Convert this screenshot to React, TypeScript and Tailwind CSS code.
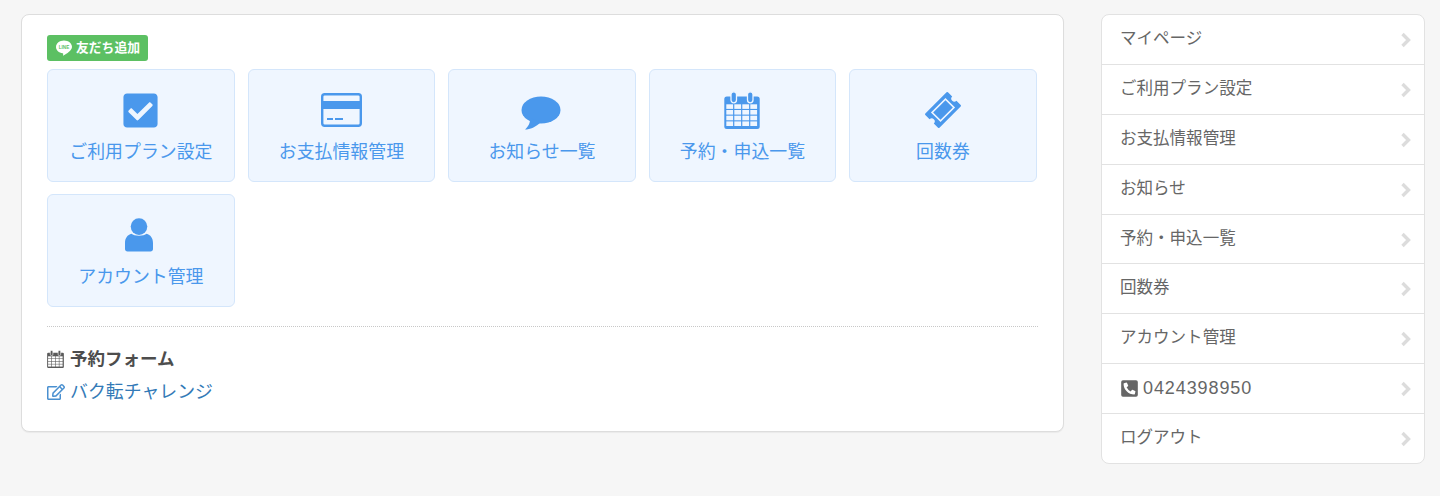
import React from "react";
import { FaCheckSquare, FaRegEdit, FaPhoneSquareAlt } from "react-icons/fa";

const font = "font-['Liberation_Sans','Noto_Sans_CJK_JP',sans-serif]";
const blue = "#4a98ec";

function Card() {
  return (
    <svg width="41" height="34" viewBox="0 0 41 34" fill="none">
      <rect x="1.2" y="1.2" width="38.600" height="31.600" rx="2.500" stroke={blue} strokeWidth="2.400" />
      <rect x="1" y="8" width="39" height="8" fill={blue} />
      <rect x="6" y="25" width="6" height="2" fill={blue} />
      <rect x="14" y="25" width="8" height="2" fill={blue} />
    </svg>
  );
}

function Calendar({ color = blue, bg = "#eff6ff", w = 36, h = 38 }: { color?: string; bg?: string; w?: number; h?: number }) {
  const cells = [];
  for (let r = 0; r < 4; r++)
    for (let c = 0; c < 4; c++)
      cells.push(<rect key={`${r}-${c}`} x={2.3 + c * 8} y={13.3 + r * 5.7} width="6.800" height="4.600" fill={bg} />);
  return (
    <svg width={w} height={h} viewBox="0 0 36 38">
      <rect x="0.3" y="5.500" width="35.400" height="32.500" rx="2.500" fill={color} />
      <rect x="7" y="0.800" width="5.500" height="11" rx="2.750" fill={color} stroke={bg} strokeWidth="1.300" />
      <rect x="23.500" y="0.800" width="5.500" height="11" rx="2.750" fill={color} stroke={bg} strokeWidth="1.300" />
      {cells}
    </svg>
  );
}

function Ticket() {
  return (
    <svg width="38" height="38" viewBox="0 0 38 38">
      <g transform="rotate(-45 19 19)">
        <path
          d="M3 10Q3 9 4 9H34Q35 9 35 10V16a3 3 0 0 0 0 6V28Q35 29 34 29H4Q3 29 3 28V22a3 3 0 0 0 0-6z"
          fill={blue}
        />
        <rect x="9.500" y="13" width="19" height="12" fill="none" stroke="#eff6ff" strokeWidth="1.600" />
      </g>
    </svg>
  );
}

function Bubble() {
  return (
    <svg width="40" height="34" viewBox="0 0 40 34" className="mt-[6px] -ml-[2px]">
      <ellipse cx="20" cy="14" rx="19.500" ry="13.500" fill={blue} />
      <path d="M9 22C9.500 27 7 31 4 33.500C9 33.500 15 31 20 26Z" fill={blue} />
    </svg>
  );
}

function Person() {
  return (
    <svg width="30" height="34" viewBox="0 0 30 34" className="-ml-[3px]">
      <circle cx="15" cy="8.600" r="8.300" fill={blue} />
      <path d="M7.500 15.800C10 18.300 20 18.300 22.500 15.800C26.500 17 29 20 29 25V31C29 32.500 28 33.500 26.500 33.500H3.500C2 33.500 1 32.500 1 31V25C1 20 3.500 17 7.500 15.800Z" fill={blue} />
    </svg>
  );
}

function Chevron() {
  return (
    <svg width="11" height="16" viewBox="0 0 11 16" fill="none" className="mt-[5px]">
      <path d="M2.500 2L8.500 8L2.500 14" stroke="#dcdcdc" strokeWidth="3.400" />
    </svg>
  );
}

const tiles: { label: string; icon: React.ReactNode }[] = [
  { label: "ご利用プラン設定", icon: <FaCheckSquare size={39} color={blue} /> },
  { label: "お支払情報管理", icon: <Card /> },
  { label: "お知らせ一覧", icon: <Bubble /> },
  { label: "予約・申込一覧", icon: <Calendar /> },
  { label: "回数券", icon: <Ticket /> },
  { label: "アカウント管理", icon: <Person /> },
];

const menu = ["マイページ", "ご利用プラン設定", "お支払情報管理", "お知らせ", "予約・申込一覧", "回数券", "アカウント管理", "TEL", "ログアウト"];

export default function App() {
  return (
    <div className={`${font} min-h-[496px] bg-[#f6f6f6] flex items-start gap-[37px] pl-[21px] pt-[14px]`}>
      <main className="w-[1043px] h-[418px] bg-white border border-[#dddddd] rounded-lg pl-[25px] pr-[25px] pt-5 shadow-[0_1px_1px_rgba(0,0,0,0.05)]">
        <div className="flex w-[101px] h-[26px] items-center gap-[3px] bg-[#5cc063] rounded-[3px] pl-2 text-white">
          <svg width="18" height="18" viewBox="0 0 18 18">
            <path d="M9 1.500C4.600 1.500 1 4.300 1 7.900c0 3.200 2.900 5.900 6.700 6.300.9.200.4 1.400.3 2 0 .4.3.4.7.2 1-.5 5.100-3 7-5.400.8-1 1.300-2 1.300-3.100 0-3.600-3.600-6.400-8-6.400z" fill="#fff" />
            <text x="9" y="9.700" textAnchor="middle" fontSize="4.600" fontWeight="700" fill="#5cc063" fontFamily="Liberation Sans">LINE</text>
          </svg>
          <span className="text-[12.800px] font-bold leading-none">友だち追加</span>
        </div>
        <div className="grid grid-cols-[repeat(5,187.800px)] gap-x-[12.720px] gap-y-3 mt-2">
          {tiles.map((t) => (
            <div key={t.label} className="h-[113px] bg-[#eff6ff] border border-[#d4e6fb] rounded-md flex flex-col items-center pt-[21px] text-[#4a98ec]">
              <div className="h-[38px] flex items-center justify-center">{t.icon}</div>
              <div className="mt-[10px] text-[17.900px] leading-[26px]">{t.label}</div>
            </div>
          ))}
        </div>
        <div className="mt-[19px] border-t border-dotted border-[#c8c8c8]" />
        <div className="mt-[19px] flex items-center gap-[6px] text-[#4d4d4d] text-[17.500px] font-bold leading-[26px]">
          <Calendar color="#5a5a5a" bg="#ffffff" w={17} h={18} />
          <span>予約フォーム</span>
        </div>
        <div className="mt-[7px] flex items-center gap-[5px] text-[#337ab7] text-[17.900px] leading-[26px]">
          <FaRegEdit size={18} color="#4a90d0" />
          <span>バク転チャレンジ</span>
        </div>
      </main>
      <aside className="w-[324px] bg-white border border-[#e2e2e2] rounded-lg overflow-hidden">
        {menu.map((m, i) => (
          <div key={m} className={`${i < menu.length - 1 ? "h-[49.880px] border-b border-[#e2e2e2]" : "h-[49.300px]"} flex items-start justify-between pl-[18px] pr-[13px] pt-[12px] text-[#666666] text-[16.550px] leading-[24px]`}>
            {m === "TEL" ? (
              <span className="flex items-center gap-[4px] text-[18px] tracking-[0.9px]">
                <FaPhoneSquareAlt size={19} color="#666666" />
                0424398950
              </span>
            ) : (
              <span>{m}</span>
            )}
            <Chevron />
          </div>
        ))}
      </aside>
    </div>
  );
}
